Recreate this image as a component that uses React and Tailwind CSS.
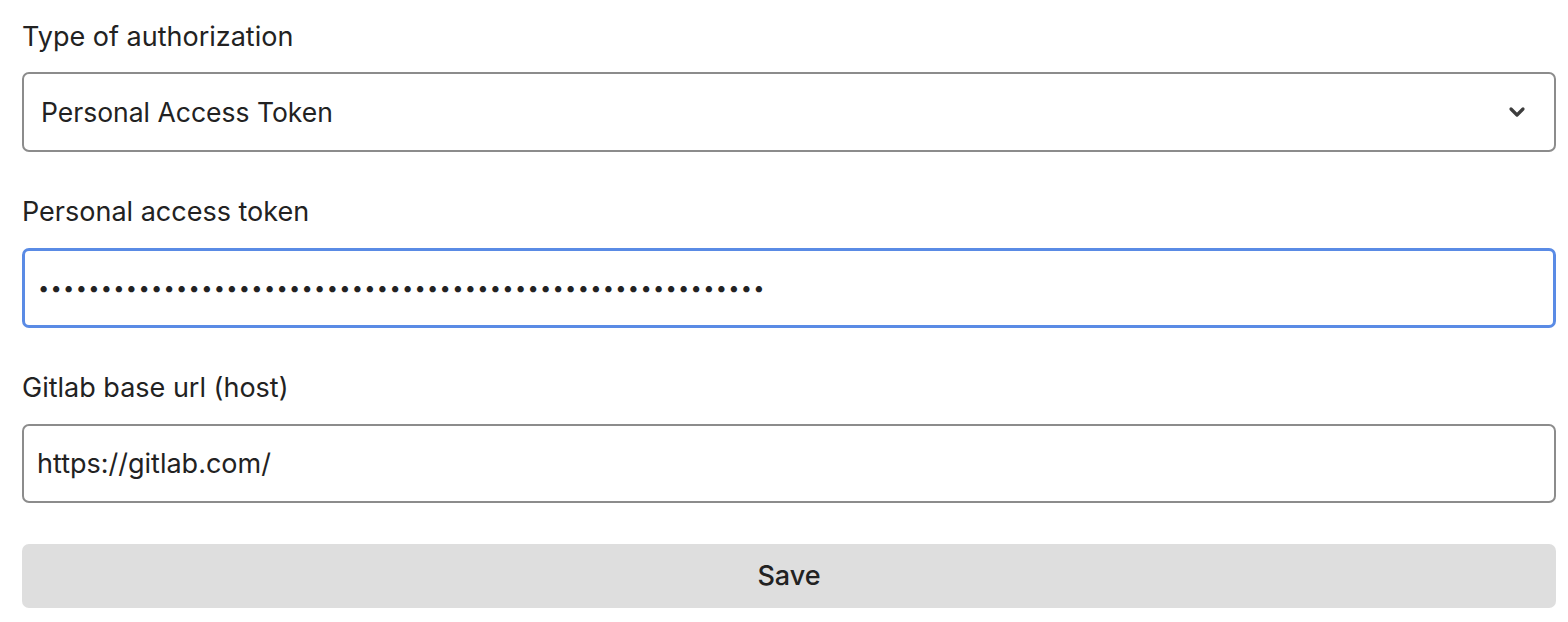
import React from "react";

const TOKEN = "x".repeat(58);

const Label = ({ children }) => (
  <label className="block h-[40px] leading-[40px] text-[27px] text-[#222]">
    {children}
  </label>
);

export default function App() {
  return (
    <div
      className="w-[1568px] h-[622px] bg-white pl-[22px] pr-[12px] pt-[17px] text-[#222]"
      style={{ fontFamily: "Inter, 'Noto Sans', sans-serif" }}
    >
      {/* Type of authorization */}
      <Label>Type of authorization</Label>
      <div className="mt-[15px] relative h-[80px] rounded-[7px] border-2 border-[#8c8c8c] flex items-center pl-[17px] pr-[28px]">
        <span className="text-[26.5px] flex-1 pt-[2px]">Personal Access Token</span>
        <svg width="18" height="12" viewBox="0 0 18 12" className="text-[#3d3d3d]">
          <polyline
            points="3,3 9,9 15,3"
            fill="none"
            stroke="currentColor"
            strokeWidth="3.2"
            strokeLinecap="round"
            strokeLinejoin="round"
          />
        </svg>
      </div>

      {/* Personal access token */}
      <div className="mt-[40px]">
        <Label>Personal access token</Label>
      </div>
      <input
        type="password"
        readOnly
        value={TOKEN}
        className="mt-[16px] block w-full h-[80px] rounded-[7px] border-[3px] border-[#5a8be5] px-[13px] text-[20px] tracking-[1.3px] outline-none text-[#222]"
        style={{ fontFamily: "Inter, 'Noto Sans', sans-serif" }}
      />

      {/* Gitlab base url */}
      <div className="mt-[40px]">
        <Label>Gitlab base url (host)</Label>
      </div>
      <input
        type="text"
        readOnly
        value="https://gitlab.com/"
        className="mt-[16px] block w-full h-[79px] rounded-[7px] border-2 border-[#8c8c8c] px-[13px] text-[27px] text-[#222] outline-none"
        style={{ fontFamily: "Inter, 'Noto Sans', sans-serif" }}
      />

      <button
        type="button"
        className="mt-[41px] block w-full h-[64px] rounded-[7px] bg-[#dedede] text-[27px] font-medium text-[#222]"
      >
        Save
      </button>
    </div>
  );
}
